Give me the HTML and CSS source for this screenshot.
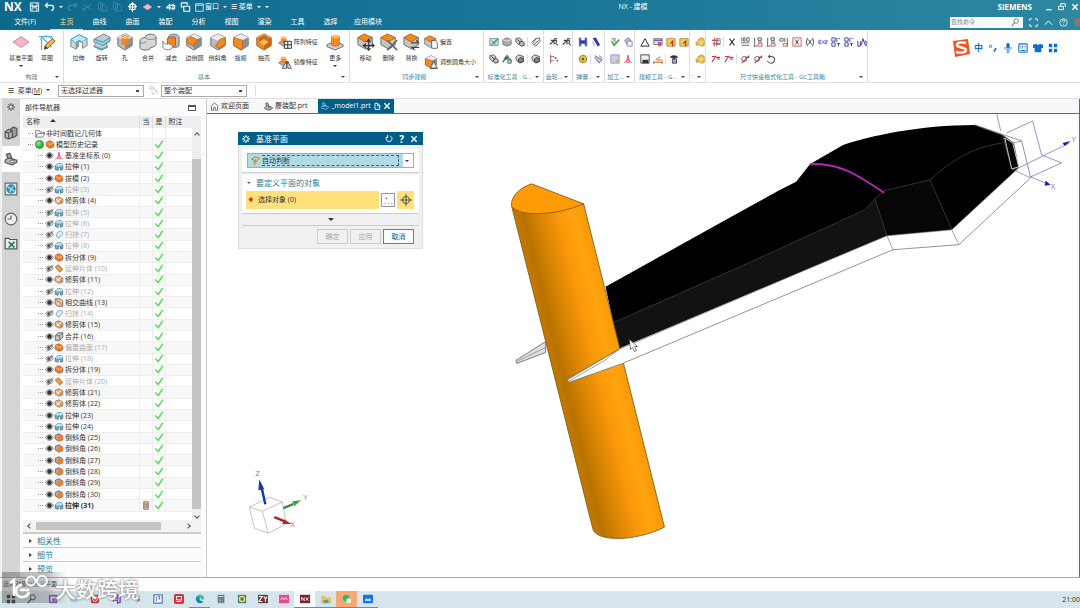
FILE: index.html
```html
<!DOCTYPE html>
<html lang="zh-CN">
<head>
<meta charset="utf-8">
<title>NX - 建模</title>
<link rel="stylesheet" href="styles.css">
</head>
<body>
<svg class="defs" aria-hidden="true">
  <symbol id="cube" viewBox="0 0 20 20"><path d="M10 1l8 4v9l-8 5-8-5V5z" fill="#b9b9b9" stroke="#666"/><path d="M10 1l8 4-8 4-8-4z" fill="#eee"/><path d="M10 9l8-4v9l-8 5z" fill="#8d8d8d"/></symbol>
  <symbol id="ocube" viewBox="0 0 20 20"><path d="M10 1l8 4v9l-8 5-8-5V5z" fill="#f28a1e" stroke="#8a5a2a"/><path d="M10 1l8 4-8 4-8-4z" fill="#ffb052"/><path d="M10 9l8-4v9l-8 5z" fill="#c8660c"/></symbol>
  <symbol id="plane" viewBox="0 0 20 20"><path d="M1 10l9-6 9 6-9 6z" fill="#f6b3c8" stroke="#d8849f"/></symbol>
  <symbol id="sketch" viewBox="0 0 20 20"><path d="M4 19V7M1 4h15M3 8c1-5 11-8 15 2M5 5l10 11" fill="none" stroke="#54b3cf" stroke-width="1.3"/><path d="M7 18l1-4 8-8 3 3-8 8z" fill="#f6b443" stroke="#6d5539"/><path d="M7 18l1-4 3 3z" fill="#444"/></symbol>
  <symbol id="extrude" viewBox="0 0 20 20"><path d="M1 7l9-5 9 4v8l-5 3v-6l-4-2-3 2v7l-6-3z" fill="#cfd8dc" stroke="#6b7b82"/><path d="M1 7l9-5 9 4-5 4-4-2-4 3z" fill="#bdeaf6" stroke="#43a9c6"/><path d="M7 11v7l3-3V8z" fill="#8d979b"/></symbol>
  <symbol id="revolve" viewBox="0 0 20 20"><path d="M1 7L12 1l7 4v4l-4 2 1 5-7 3-8-4 2-3-2-2z" fill="#c6ccd0" stroke="#6b7378"/><path d="M2 7l9 3 8-5M3 10l8 4 7-5M2 15l8 3 6-3" fill="none" stroke="#39a9cc" stroke-width="1.4"/></symbol>
  <symbol id="hole" viewBox="0 0 20 20"><use href="#cube"/><path d="M6 5v7c1 2 7 2 8 0V5z" fill="#ef8524"/><ellipse cx="10" cy="5" rx="4" ry="2" fill="#ffc47a" stroke="#c77b2e" stroke-width=".7"/></symbol>
  <symbol id="unite" viewBox="0 0 20 20"><path d="M7 5c0-5 12-5 12 0v7c0 3-4 4-6 4 0 4-12 4-12 0V9c0-3 4-4 6-4z" fill="#d6d6d6" stroke="#606060"/><path d="M7 5c1 3 11 3 12 0M1 9c0 3 7 3 7 0" fill="none" stroke="#888"/></symbol>
  <symbol id="subtract" viewBox="0 0 20 20"><path d="M7 5c0-5 12-5 12 0v8c0 3-4 3-6 3z" fill="#bcbcbc" stroke="#666"/><path d="M6 6l6-2 3 1v9l-4 2-5-3z" fill="#ee8423" stroke="#a65c16"/><path d="M1 9c0 3 4 4 7 3l4 2c0 6-11 6-11 1z" fill="#fff" stroke="#777"/></symbol>
  <symbol id="blend" viewBox="0 0 20 20"><use href="#cube"/><path d="M2 9c0-3 2-4 5-5l8 4c-4 1-5 4-5 7l-8-4z" fill="#f28a1e" stroke="#a65c16" stroke-width=".6"/></symbol>
  <symbol id="chamfer" viewBox="0 0 20 20"><use href="#cube"/><path d="M12 7l6-2v7l-6 5-5-2z" fill="#f28a1e" stroke="#a65c16" stroke-width=".6"/></symbol>
  <symbol id="draft" viewBox="0 0 20 20"><use href="#cube"/><path d="M2 5l10 3-1 11-9-5z" fill="#f28a1e" stroke="#a65c16" stroke-width=".6"/></symbol>
  <symbol id="shell" viewBox="0 0 20 20"><use href="#ocube"/><path d="M10 2l7 4-2 4-5-3-5 3-2-4z" fill="#c96c17"/><path d="M5 10l5-3 5 3-5 4z" fill="#ffbd70"/></symbol>
  <symbol id="boss" viewBox="0 0 20 20"><path d="M1 13l9-4 9 4v2l-9 4-9-4z" fill="#ccc" stroke="#666"/><path d="M6 4v9c1 2 8 2 9 0V4z" fill="#f28a1e" stroke="#a65c16" stroke-width=".6"/><ellipse cx="10.500" cy="4" rx="4.500" ry="2" fill="#ffb766"/></symbol>
  <symbol id="pattern" viewBox="0 0 20 20"><path d="M1 11l7-3 7 3-7 5z" fill="#bbb" stroke="#555"/><path d="M4 4v7c1 1 7 1 8 0V4z" fill="#f28a1e"/><ellipse cx="8" cy="4" rx="4" ry="2" fill="#ffb766"/><path d="M9 9h10v10H9zM14 9v10M9 14h10" fill="#fff" stroke="#222" stroke-width="1.300"/></symbol>
  <symbol id="mirror" viewBox="0 0 20 20"><path d="M1 11l7-3 7 3-7 5z" fill="#bbb" stroke="#555"/><path d="M4 4v7c1 1 7 1 8 0V4z" fill="#f28a1e"/><ellipse cx="8" cy="4" rx="4" ry="2" fill="#ffb766"/><path d="M12 9v10H6zM14 9v10h5z" fill="#eee" stroke="#222"/></symbol>
  <symbol id="topcube" viewBox="0 0 20 20"><path d="M1 5v8l9 5 7-5V5z" fill="#c4c4c4" stroke="#666"/><path d="M1 5l7-4 9 4-8 5z" fill="#f28a1e" stroke="#aa621d"/></symbol>
  <symbol id="move" viewBox="0 0 20 20"><use href="#topcube"/><path d="M13 8v11M8 14h11M11 10l2-3 2 3M11 17l2 2 2-2M10 12l-3 2 3 2M17 12l2 2-2 2" fill="none" stroke="#333" stroke-width="1.300"/></symbol>
  <symbol id="delete" viewBox="0 0 20 20"><use href="#topcube"/><path d="M8 8l11 11M19 8L8 19" stroke="#666" stroke-width="1.800"/></symbol>
  <symbol id="replace" viewBox="0 0 20 20"><use href="#topcube"/><path d="M9 11h8l-2-3M18 16h-8l3 3" fill="none" stroke="#444" stroke-width="1.500"/></symbol>
  <symbol id="offset" viewBox="0 0 20 20"><use href="#topcube"/><path d="M11 8h5l3 3v8h-8z" fill="#fff" stroke="#333"/></symbol>
  <symbol id="resize" viewBox="0 0 20 20"><use href="#draft"/><path d="M9 19l5-10 5 10zM9 19h10" fill="#eee" stroke="#333"/></symbol>

  <symbol id="s-win" viewBox="0 0 12 12"><path d="M1 2h10v8H1zM3 8l6-5M2 10L9 5" fill="#d5eef0" stroke="#54808a"/><path d="M3 4l5 5M7 7l4-5" stroke="#287"/></symbol>
  <symbol id="s-cyl" viewBox="0 0 12 12"><path d="M1 3l5-2 5 2v6l-5 2-5-2z" fill="#aaa" stroke="#777"/><path d="M1 3l5 2 5-2" fill="none" stroke="#eee"/></symbol>
  <symbol id="s-cyls" viewBox="0 0 12 12"><path d="M1 2l4-1 3 2v4L4 9 1 6z" fill="#ccc" stroke="#555"/><path d="M6 6l3-1 2 2v3l-3 1-3-2z" fill="#bbb" stroke="#333"/><path d="M3 3l3 3" stroke="#333"/></symbol>
  <symbol id="s-tag" viewBox="0 0 12 12"><path d="M2 8l4-6 4-1 1 4-5 6z" fill="#eee" stroke="#555"/><path d="M1 6l5-4M4 9l5-5" fill="none" stroke="#555"/></symbol>
  <symbol id="s-people" viewBox="0 0 12 12"><path d="M1 10l5-8 5 7" fill="none" stroke="#3a9b45" stroke-width="2"/><circle cx="5" cy="5" r="2" fill="#3557bd"/><path d="M7 7h4v4H7z" fill="#ccc" stroke="#555"/></symbol>
  <symbol id="s-gear" viewBox="0 0 12 12"><path d="M1 4l3-3 6 2v6l-4 2-4-3z" fill="#ddd" stroke="#444"/><path d="M4 6l3-2 3 2v3l-3 1-3-1z" fill="#888" stroke="#333"/></symbol>
  <symbol id="s-drw" viewBox="0 0 12 12"><path d="M1 9l5-5v5M2 4h7M6 2h4M7 7l4 3M9 4v3" fill="none" stroke="#444" stroke-width="1.300"/></symbol>
  <symbol id="s-link" viewBox="0 0 12 12"><path d="M2 1v10" stroke="#444"/><path d="M2 3h4v2M2 8h4" fill="none" stroke="#c75d42"/><path d="M7 4h2v2H7zM9 7h2v2H9z" fill="#5269bd"/></symbol>
  <symbol id="s-h" viewBox="0 0 12 12"><path d="M1 1h3v10H1zM8 1h3v10H8z" fill="#5662b8"/><path d="M3 4h6v4H3z" fill="#2936aa"/></symbol>
  <symbol id="s-pen" viewBox="0 0 12 12"><path d="M3 1l6 10M5 1l5 9" stroke="#2d39b3" stroke-width="2"/><path d="M2 5l2 6" stroke="#9997c8"/></symbol>
  <symbol id="s-ring" viewBox="0 0 12 12"><circle cx="6" cy="6" r="4.500" fill="#f1ca3c" stroke="#836d21"/><path d="M4 6l2-2 2 2-2 2z" fill="#654"/></symbol>
  <symbol id="s-clip" viewBox="0 0 12 12"><path d="M1 2l9 5-4 4-5-7M6 2l4 3" fill="#c8c7d9" stroke="#65618f"/></symbol>
  <symbol id="s-ok" viewBox="0 0 12 12"><path d="M1 1h6v7z" fill="#b0aadc"/><path d="M2 5l3 5 6-7" fill="none" stroke="#43a63b" stroke-width="2"/></symbol>
  <symbol id="s-copy" viewBox="0 0 12 12"><path d="M2 4l5-3 3 5-5 3z" fill="#c9c2e6" stroke="#7a6ca8"/><path d="M5 5h6v6H5z" fill="#f5f5f5" stroke="#847aaa"/></symbol>
  <symbol id="s-pic" viewBox="0 0 12 12"><path d="M1 1h10v10H1z" fill="#cacce8" stroke="#9392b5"/><path d="M7 6h4v4H7z" fill="#e8b64e"/></symbol>
  <symbol id="s-axis" viewBox="0 0 12 12"><path d="M6 1v6L1 11M6 7l5 4M4 10l2-8 2 8z" fill="none" stroke="#d95a8e" stroke-width="1.200"/></symbol>
  <symbol id="s-tri" viewBox="0 0 12 12"><path d="M6 2l5 9H1z" fill="none" stroke="#333" stroke-width="1.200"/></symbol>
  <symbol id="s-table" viewBox="0 0 12 12"><path d="M1 2h10v7H1z" fill="#f1ddec" stroke="#83558d"/><path d="M1 4h10" stroke="#6670b0" stroke-width="2"/><path d="M6 6h4v5H6z" fill="#bc5b65"/></symbol>
  <symbol id="s-folder" viewBox="0 0 12 12"><path d="M1 2h10v9H1z" fill="#f1cf5c" stroke="#ae8c35"/><path d="M5 8l3-3v6" fill="none" stroke="#b32d31" stroke-width="1.400"/></symbol>
  <symbol id="s-save" viewBox="0 0 12 12"><path d="M1 1h10v10H1z" fill="#eee" stroke="#333"/><path d="M3 7h7v4H3z" fill="#333"/></symbol>
  <symbol id="s-dim" viewBox="0 0 12 12"><path d="M1 10h10M1 8v4M11 8v4M3 7l6-4" stroke="#b65334"/><path d="M4 6h7v3H4z" fill="#e3c16c"/></symbol>
  <symbol id="s-hat" viewBox="0 0 12 12"><path d="M1 4c2-4 9-3 10 0L6 6z" fill="#333"/><path d="M4 6h5v5H4z" fill="#8daed5" stroke="#334"/></symbol>
  <symbol id="s-gold" viewBox="0 0 12 12"><path d="M1 7l3-2V3l4-2 3 2v7l-3 1-3-2-3 1z" fill="#f0c24a" stroke="#b88b1e"/><path d="M4 5l3 2 4-2M7 7v3" fill="none" stroke="#fff0a8"/></symbol>
  <symbol id="s-rgrid" viewBox="0 0 12 12"><path d="M4 1v10M7 2v9M1 4h9M2 8h9" stroke="#bd5261" stroke-width="1.300"/><path d="M7 2h4v7H7z" fill="none" stroke="#777"/></symbol>
  <symbol id="s-x" viewBox="0 0 12 12"><path d="M3 2l6 8M9 2l-6 8" stroke="#333" stroke-width="1.300"/></symbol>
  <symbol id="s-x1" viewBox="0 0 12 12"><path d="M2 1v4M4 1h2v4H4zM8 1h3v4H8zM1 7h10M2 10h9" fill="none" stroke="#555"/></symbol>
  <symbol id="s-x2" viewBox="0 0 12 12"><path d="M2 1v10M1 11h4M6 1h4v3H6zM6 6h5" fill="none" stroke="#444"/><path d="M6 8h5v3H6z" fill="none" stroke="#c44652"/></symbol>
  <symbol id="s-x3" viewBox="0 0 12 12"><path d="M1 2h4v3H1zM7 1v5M10 1v10" fill="none" stroke="#555"/><path d="M5 8h5v3H5z" fill="none" stroke="#c44652"/></symbol>
  <symbol id="s-bx" viewBox="0 0 12 12"><path d="M1 1h10v10H1z" fill="#fff6f6" stroke="#bd5050"/><path d="M4 3l4 6M8 3L4 9" stroke="#333"/></symbol>
  <symbol id="s-px" viewBox="0 0 12 12"><path d="M3 1Q0 6 3 11M9 1q3 5 0 10M4 3l4 6M8 3L4 9" fill="none" stroke="#333"/></symbol>
  <symbol id="s-ex" viewBox="0 0 12 12"><path d="M4 4H1v4h3M1 6h3M5 4l3 4M8 4L5 8M9 4h2v2H9v2h2" fill="none" stroke="#5353bb"/></symbol>
  <symbol id="s-blue" viewBox="0 0 12 12"><path d="M1 1h4v4H1zM7 1v5M9 2h2M1 7h4v4H1zM7 8h4M9 7v4" fill="none" stroke="#4d4da9" stroke-width="1.200"/></symbol>
  <symbol id="s-blue2" viewBox="0 0 12 12"><path d="M1 5v6h3V5M5 10l2-8 3 8M9 5h2v6" fill="none" stroke="#4444a5" stroke-width="1.200"/></symbol>
  <symbol id="s-red" viewBox="0 0 12 12"><path d="M1 10l5-8M1 3h4M6 4h5M7 6h4" fill="none" stroke="#b93d48" stroke-width="1.300"/></symbol>
  <symbol id="s-redcut" viewBox="0 0 12 12"><circle cx="5" cy="6" r="3" fill="none" stroke="#555"/><path d="M2 11l9-9M6 4h5" stroke="#bb3944" stroke-width="1.300"/></symbol>
  <symbol id="s-undo" viewBox="0 0 12 12"><path d="M3 3h4c5 1 4 8-1 8-3 0-4-2-4-3M5 1L3 3l2 2" fill="none" stroke="#555" stroke-width="1.300"/></symbol>

  <symbol id="eye" viewBox="0 0 12 12"><path d="M1 6c2-5 8-5 10 0-2 5-8 5-10 0z" fill="#ddd" stroke="#666"/><circle cx="6" cy="6" r="3" fill="#333"/></symbol>
  <symbol id="noeye" viewBox="0 0 12 12"><path d="M1 6c2-4 8-4 10 0-2 4-8 4-10 0zM2 11l8-10M4 11L11 2" fill="#eee" stroke="#666"/><circle cx="5" cy="6" r="2" fill="#555"/></symbol>
  <symbol id="t-extrude" viewBox="0 0 12 12"><path d="M1 5l3-3h5l2 3v5l-3 1V7H5v4l-4-1z" fill="#62b5d1" stroke="#4a6874"/><path d="M1 5l3-3h5l2 3-3 1H4z" fill="#b4e5f2"/></symbol>
  <symbol id="t-trim" viewBox="0 0 12 12"><path d="M1 3l5-2 5 3v5l-5 2-5-3z" fill="#ddb48f" stroke="#855f49"/><path d="M3 8l6-5M2 4l6 5" stroke="#fff"/><path d="M7 6h4v3l-4 2z" fill="#e98732"/></symbol>
  <symbol id="t-split" viewBox="0 0 12 12"><path d="M1 3l5-2 5 3v5l-5 2-5-3z" fill="#ed812a" stroke="#a15725"/><path d="M1 3l5 3 5-2" fill="none" stroke="#ffc48b"/></symbol>
  <symbol id="t-sheet" viewBox="0 0 12 12"><path d="M1 4l4-3 6 6-4 4z" fill="#eb8b38" stroke="#aa6632"/><path d="M3 4l4 4" stroke="#ffd8ad"/></symbol>
  <symbol id="t-scale" viewBox="0 0 12 12"><path d="M3 9c-3-5 6-10 8-5 0 3-4 4-5 7z" fill="#d7eff6" stroke="#4c98ab"/></symbol>
  <symbol id="t-unite" viewBox="0 0 12 12"><path d="M1 5l4-4h6v6l-4 4H1z" fill="#c9c9c9" stroke="#444"/><path d="M1 5h6l4-4M7 5v6" fill="none" stroke="#555"/></symbol>
  <symbol id="t-curve" viewBox="0 0 12 12"><path d="M1 1h7l3 3v7H4L1 8z" fill="#e0c7b0" stroke="#71513e"/><path d="M3 2c0 5 6 1 6 7" fill="none" stroke="#b95229"/></symbol>
  <symbol id="t-chamfer" viewBox="0 0 12 12"><path d="M1 3l5-2 5 3v5l-5 2-5-3z" fill="#aaa" stroke="#744"/><path d="M5 3l6 1v5l-5 2-2-3z" fill="#ef8228"/></symbol>
  <symbol id="stack-mark" viewBox="0 0 12 12"><path d="M3 1h6v10H3zM3 4h6M3 8h6" fill="#f2d2b4" stroke="#555"/><path d="M5 5h3v2H5z" fill="#e17424"/></symbol>
  <symbol id="folder" viewBox="0 0 14 12"><path d="M1 11V2h5l1 2h6v2M1 11l3-5h10l-3 5z" fill="#fff" stroke="#555"/></symbol>
  <symbol id="check" viewBox="0 0 12 12"><path d="M1 6l4 4 6-9" fill="none" stroke="#5edb62" stroke-width="2"/></symbol>
  <symbol id="clamp" viewBox="0 0 12 12"><path d="M2 2l3-1 2 5-3 1z" fill="#aaa" stroke="#555"/><path d="M1 7l3-2 7 2v2l-4 2-6-2z" fill="#bbb" stroke="#555"/><ellipse cx="7" cy="8" rx="2" ry="1" fill="#eee" stroke="#555" stroke-width=".7"/></symbol>
  <symbol id="home" viewBox="0 0 12 12"><path d="M1 6l5-5 5 5M2 6v5h3V7h2v4h3V6" fill="none" stroke="#555"/></symbol>
  <symbol id="cog" viewBox="0 0 12 12"><circle cx="6" cy="6" r="3.300" fill="none" stroke="currentColor" stroke-width="1.600"/><path d="M6 0v2M6 10v2M0 6h2M10 6h2M2 2l1 1M9 9l1 1M10 2L9 3M3 9l-1 1" stroke="currentColor" stroke-width="1.500"/></symbol>
  <symbol id="reset" viewBox="0 0 12 12"><path d="M4 2C1 3 1 10 6 10s6-7 2-8M4 0v4H1" fill="none" stroke="currentColor" stroke-width="1.500"/></symbol>
  <symbol id="cross" viewBox="0 0 12 12"><path d="M2 2l8 8M10 2l-8 8" stroke="currentColor" stroke-width="2"/></symbol>
  <symbol id="search" viewBox="0 0 12 12"><circle cx="7" cy="4" r="3" fill="none" stroke="currentColor" stroke-width="1.200"/><path d="M5 6l-4 5" stroke="currentColor" stroke-width="1.500"/></symbol>

  <symbol id="q-save" viewBox="0 0 12 12"><path d="M1 1h10v10H1zM3 1v4h6V1M3 11V7h6v4M1 5h10" fill="none" stroke="currentColor"/></symbol>
  <symbol id="q-undo" viewBox="0 0 12 12"><path d="M1 4h7c4 0 4 6 0 6M4 1L1 4l3 3" fill="none" stroke="currentColor" stroke-width="1.400"/></symbol>
  <symbol id="q-redo" viewBox="0 0 12 12"><path d="M11 4H4c-4 0-4 6 0 6M8 1l3 3-3 3" fill="none" stroke="currentColor" stroke-width="1.400"/></symbol>
  <symbol id="q-cut" viewBox="0 0 12 12"><path d="M1 3l10 6M11 3L1 9" stroke="currentColor"/><circle cx="2" cy="9" r="1.500" fill="none" stroke="currentColor"/></symbol>
  <symbol id="q-page" viewBox="0 0 12 12"><path d="M1 1h5v8H1zM4 3h5l2 2v6H4z" fill="none" stroke="currentColor"/></symbol>
  <symbol id="q-cam" viewBox="0 0 12 12"><path d="M6 0v12M1 6h10M3 3h6v6H3zM1 6l2-2M11 6L9 4M6 1L4 3M6 1l2 2" fill="none" stroke="currentColor" stroke-width="1.300"/></symbol>
  <symbol id="q-arr" viewBox="0 0 12 12"><path d="M1 7l4-4v7M1 7h6M6 4h5v4H7M9 2v8" fill="none" stroke="currentColor" stroke-width="1.300"/></symbol>
  <symbol id="q-dup" viewBox="0 0 12 12"><path d="M1 1h7v3M1 1v5h3M4 5h7v6H4z" fill="none" stroke="currentColor" stroke-width="1.300"/></symbol>
  <symbol id="q-win" viewBox="0 0 12 12"><path d="M1 1h10v10H1zM1 3h10" fill="none" stroke="currentColor"/></symbol>
</svg>

<header class="top">
  <div class="titlebar">
    <b class="logo">NX</b>
    <div class="quick">
      <button aria-label="保存"><svg><use href="#q-save"/></svg></button>
      <button aria-label="撤销"><svg><use href="#q-undo"/></svg></button><i class="caret"></i>
      <button class="dim" aria-label="重做"><svg><use href="#q-redo"/></svg></button>
      <button class="dim" aria-label="剪切"><svg><use href="#q-cut"/></svg></button>
      <button class="dim" aria-label="复制"><svg><use href="#q-page"/></svg></button>
      <button class="dim" aria-label="粘贴"><svg><use href="#q-page"/></svg></button>
      <button aria-label="捕捉"><svg><use href="#q-cam"/></svg></button>
      <button aria-label="平面"><svg><use href="#plane"/></svg></button><i class="caret"></i>
      <button aria-label="重复"><svg><use href="#q-arr"/></svg></button>
      <button aria-label="切换"><svg><use href="#q-dup"/></svg></button>
      <button class="wide"><svg><use href="#q-win"/></svg>窗口</button><i class="caret"></i>
      <button class="wide">☰ 菜单</button><i class="caret"></i><i class="caret"></i>
    </div>
    <h1>NX - 建模</h1>
    <div class="brand">
      <b>SIEMENS</b>
      <button aria-label="最小化"><svg viewBox="0 0 12 12"><path d="M2 10h8" stroke="currentColor" stroke-width="2"/></svg></button>
      <button aria-label="还原"><svg viewBox="0 0 12 12"><path d="M4 1h7v5M4 1v3M1 5h7v5H1z" fill="none" stroke="currentColor" stroke-width="1.500"/></svg></button>
      <button aria-label="关闭"><svg><use href="#cross"/></svg></button>
    </div>
  </div>
  <div class="menubar">
    <nav>
      <a href="#" class="file">文件(F)</a><a href="#" class="on">主页</a><a href="#">曲线</a><a href="#">曲面</a><a href="#">装配</a><a href="#">分析</a><a href="#">视图</a><a href="#">渲染</a><a href="#">工具</a><a href="#">选择</a><a href="#" class="long">应用模块</a>
    </nav>
    <div class="find">
      <label class="findbox"><input type="text" placeholder="查找命令" aria-label="查找命令"><svg><use href="#search"/></svg></label>
      <button aria-label="全屏"><svg viewBox="0 0 12 12"><path d="M1 4V1h3M8 1h3v3M11 8v3H8M4 11H1V8" fill="none" stroke="currentColor" stroke-width="1.200"/></svg></button>
      <button aria-label="收起"><svg viewBox="0 0 12 12"><path d="M1 9l5-5 5 5" fill="none" stroke="currentColor" stroke-width="1.300"/></svg></button>
      <button aria-label="帮助"><svg viewBox="0 0 12 12"><circle cx="6" cy="6" r="5" fill="none" stroke="currentColor"/><path d="M4 5c0-3 4-3 4-1 0 1-2 1-2 3M6 8v1" fill="none" stroke="currentColor"/></svg></button>
      <span class="dot"></span>
    </div>
  </div>
</header>

<section class="ribbon" aria-label="功能区">
  <div class="group g-build">
    <div class="tools">
      <button class="big"><svg><use href="#plane"/></svg>基准平面<i class="caret"></i></button>
      <button class="big"><svg><use href="#sketch"/></svg>草图</button>
    </div>
    <footer>构建<i class="caret"></i></footer>
  </div>
  <div class="group g-base">
    <div class="tools">
      <button class="big"><svg><use href="#extrude"/></svg>拉伸</button>
      <button class="big"><svg><use href="#revolve"/></svg>旋转</button>
      <button class="big"><svg><use href="#hole"/></svg>孔</button>
      <button class="big"><svg><use href="#unite"/></svg>合并</button>
      <button class="big"><svg><use href="#subtract"/></svg>减去</button>
      <button class="big"><svg><use href="#blend"/></svg>边倒圆</button>
      <button class="big"><svg><use href="#chamfer"/></svg>倒斜角</button>
      <button class="big"><svg><use href="#draft"/></svg>拔模</button>
      <button class="big"><svg><use href="#shell"/></svg>抽壳</button>
      <div class="stack">
        <button><svg><use href="#pattern"/></svg>阵列特征</button>
        <button><svg><use href="#mirror"/></svg>镜像特征</button>
      </div>
      <button class="big"><svg><use href="#boss"/></svg>更多<i class="caret"></i></button>
    </div>
    <footer>基本<i class="caret"></i></footer>
  </div>
  <div class="group g-sync">
    <div class="tools">
      <button class="big"><svg><use href="#move"/></svg>移动</button>
      <button class="big"><svg><use href="#delete"/></svg>删除</button>
      <button class="big"><svg><use href="#replace"/></svg>替换</button>
      <div class="stack">
        <button><svg><use href="#offset"/></svg>偏置</button>
        <button><svg><use href="#resize"/></svg>调整圆角大小</button>
      </div>
    </div>
    <footer>同步建模<i class="caret"></i></footer>
  </div>
  <div class="group g-std">
    <div class="small" data-rows="win cyl cyls | tag / cyls people gear | gear"></div>
    <footer>标准化工具 - G...<i class="caret"></i></footer>
  </div>
  <div class="group g-gear">
    <div class="small" data-rows="drw drw / link"></div>
    <footer>齿轮...<i class="caret"></i></footer>
  </div>
  <div class="group g-spring">
    <div class="small" data-rows="h pen / ring | clip"></div>
    <footer>弹簧...<i class="caret"></i></footer>
  </div>
  <div class="group g-mach">
    <div class="small" data-rows="ok copy / pic axis"></div>
    <footer>加工...<i class="caret"></i></footer>
  </div>
  <div class="group g-model">
    <div class="small" data-rows="tri table folder folder / save dim | hat"></div>
    <footer>建模工具 - G...<i class="caret"></i></footer>
  </div>
  <div class="group g-tiny">
    <div class="small" data-rows="gold / gold"></div>
    <footer>'.<i class="caret"></i></footer>
  </div>
  <div class="group g-dim">
    <div class="small" data-rows="rgrid | x x1 x2 x2 x3 bx px ex blue blue blue2 / red red | redcut redcut undo"></div>
    <footer>尺寸快速格式化工具 - GC工具箱<i class="caret"></i></footer>
  </div>
</section>

<div class="selbar">
  <button>☰&nbsp; 菜单(<u>M</u>)<i class="caret"></i></button>
  <select aria-label="选择过滤器"><option>无选择过滤器</option></select>
  <svg viewBox="0 0 12 12"><path d="M1 1h5v3H1zM6 4l4 3M8 7h3v4M4 6v4h4" fill="none" stroke="#bbb"/></svg>
  <select aria-label="选择范围"><option>整个装配</option></select>
  <span class="rule"></span>
</div>

<main class="work">
  <nav class="rail" aria-label="资源条">
    <button aria-label="设置"><svg><use href="#cog"/></svg></button>
    <button aria-label="装配导航器"><svg viewBox="0 0 12 12"><path d="M5 3l3-2 3 1v6L8 10z" fill="#999" stroke="#555"/><path d="M1 5l3-2 3 1v6l-3 1-3-1z" fill="#bbb" stroke="#555"/><path d="M1 5l3 1 3-2M4 6v5" fill="none" stroke="#555"/></svg></button>
    <button class="on" aria-label="部件导航器"><svg><use href="#clamp"/></svg></button>
    <button aria-label="浏览器"><svg viewBox="0 0 12 12"><path d="M1 1h10v10H1z" fill="#e5eff1" stroke="#667"/><circle cx="6" cy="6" r="4" fill="#2b93b5"/><path d="M3 4l3 2 2-2M5 9l1-3 3 2" fill="none" stroke="#b9e3ea"/></svg></button>
    <button aria-label="历史记录"><svg viewBox="0 0 12 12"><circle cx="6" cy="6" r="5" fill="#eee" stroke="#666"/><path d="M6 3v3H3" fill="none" stroke="#666"/></svg></button>
    <button aria-label="角色"><svg viewBox="0 0 12 12"><path d="M1 2h3l1 1h6v8H1z" fill="#e6efeb" stroke="#555"/><path d="M4 5l5 5M9 5l-5 5" stroke="#3b796d" stroke-width="1.500"/></svg></button>
  </nav>

  <aside class="panel">
    <h2>部件导航器<button aria-label="最大化"></button></h2>
    <div class="treebox">
      <div class="treewrap">
        <table class="tree">
          <thead><tr><th>名称<i class="caret up"></i></th><th>当</th><th>是</th><th>附注</th></tr></thead>
          <tbody id="tree"></tbody>
        </table>
      </div>
      <div class="vbar"><i class="chev up"></i><span></span><i class="chev down"></i></div>
    </div>
    <div class="hbar"><i class="chev left"></i><span></span><i class="chev right"></i></div>
    <button class="fold"><i class="tri"></i>相关性</button>
    <button class="fold"><i class="tri"></i>细节</button>
    <button class="fold"><i class="tri"></i>预览</button>
  </aside>

  <section class="view">
    <nav class="tabs">
      <a href="#"><svg><use href="#home"/></svg>欢迎页面</a>
      <a href="#"><svg><use href="#clamp"/></svg>履装配.prt</a>
      <a href="#" class="on"><svg viewBox="0 0 12 12"><path d="M2 2l3-1 2 5-3 1zM1 7l3-2 7 2v2l-4 2-6-2z" fill="none" stroke="#9cc3d3" stroke-width="1.200"/></svg><span>_model1.prt</span><svg viewBox="0 0 12 12"><path d="M3 2h4l3 3v6H3zM7 2v4h4" fill="none" stroke="#fff" stroke-width="1.300"/></svg><svg><use href="#cross"/></svg></a>
    </nav>
    <div class="canvas">
      <svg class="scene" viewBox="206 114 873 464" preserveAspectRatio="xMidYMid meet" role="img" aria-label="三维模型">
        <defs>
          <linearGradient id="skin" gradientUnits="userSpaceOnUse" x1="551" y1="365" x2="619" y2="348">
            <stop offset="0" stop-color="#c47900"/><stop offset=".12" stop-color="#b87200"/><stop offset=".35" stop-color="#da8504"/><stop offset=".6" stop-color="#f99708"/><stop offset=".82" stop-color="#ffa40f"/><stop offset="1" stop-color="#f79a08"/>
          </linearGradient>
        </defs>
        <path d="M515 361l30-19v11l-29 11z" fill="#ddd" stroke="#666" stroke-width=".8"/><path d="M516 362l29-14" stroke="#777" stroke-width=".6"/>
        <path d="M605 287L740 212 780 190 796 182 810 164 843 145C870 136 920 125 975 125L1003 135 1015 143 1019 168 952 230 887 236 806 270 618 349z"/>
        <path d="M613 323L740 267 865 210 875 199 887 236 806 270 618 349z" fill="#121212"/>
        <path d="M875 199l9-8 46-11 23 50-66 6z" fill="#060606"/>
        <path d="M613 323L740 267 865 210 875 199 884 191 930 180C955 158 975 147 1003 143M875 199l12 37M930 180l22 50" fill="none" stroke="#3d3d3d" stroke-width=".8"/>
        <path d="M511 207L592 529C594 543 635 543 664 528L583 204z" fill="url(#skin)" stroke="#78521b" stroke-width=".8"/>
        <path d="M531 184L583 204C558 215 520 218 511 207 509 198 518 188 531 184z" fill="#ff9b06" stroke="#7a5620" stroke-width=".8"/>
        <path d="M567 380L618 350 806 270 887 236 952 230 1019 168 1014 143 1003 135 975 125 1022 141 1031 178 959 245 893 250 622 364 568 383z" fill="#fff" stroke="#666" stroke-width=".7"/>
        <path d="M567 380l37-22 14-8-14 11-36 21M887 236l6 14M952 230l7 15M1003 135l9 34 7-1M1014 143l8-2M1012 169l19 9" fill="none" stroke="#777" stroke-width=".7"/>
        <path d="M1005 138l8 5 6 24-7 2z" fill="#080808" stroke="#eee" stroke-width=".8"/>
        <path d="M810 164C838 163 855 173 884 193" fill="none" stroke="#c724c9" stroke-width="1.800"/>
        <path d="M997 114l4 17M1007 133l26-12 9 34 20 8-31 14M1019 168l51-25M1031 177l19 8" fill="none" stroke="#7777d6" stroke-width=".8"/>
        <path d="M1063 143l8-2-6 5zM1046 181l5 4-6 1z" fill="#1b1bb5"/>
        <text x="1072" y="142" class="axis blue">Y</text><text x="1051" y="189" class="axis blue">X</text>
        <path d="M629 340l1 10 2-2 2 4 2-1-2-4h3z" fill="#fff" stroke="#555" stroke-width=".8"/>
        <path d="M248 508l20-10 13 5-20 9zM248 508l5 21 14 5-6-22M281 503l4 22-18 9" fill="none" stroke="#aaa" stroke-width=".7"/>
        <path d="M264 505l-4-18" stroke="#1233a7" stroke-width="2.400"/><path d="M258 480l5 10-6 1z" fill="#173ab3"/>
        <path d="M282 509l10-4" stroke="#3b8d3b" stroke-width="2.400"/><path d="M300 501l-7 6-2-5z" fill="#459d45"/>
        <path d="M273 518l10 4" stroke="#ac2222" stroke-width="2.400"/><path d="M290 525l-9 0 2-5z" fill="#b62828"/>
        <text x="254" y="477" class="axis zc">Z</text><text x="302" y="501" class="axis yc">Y</text><text x="289" y="528" class="axis xc">X</text>
      </svg>

      <section class="dialog" role="dialog" aria-label="基准平面">
        <header><svg><use href="#cog"/></svg><h3>基准平面</h3><button aria-label="重置"><svg><use href="#reset"/></svg></button><button aria-label="帮助" class="q">?</button><button aria-label="关闭"><svg><use href="#cross"/></svg></button></header>
        <div class="card">
          <div class="combo">
            <svg viewBox="0 0 12 12"><path d="M1 4l5-3 5 2-4 4z" fill="#f6e58a" stroke="#765"/><path d="M7 3L4 8h3l-3 4" fill="none" stroke="#c4902d" stroke-width="1.500"/></svg>
            <select aria-label="类型"><option>自动判断</option></select>
            <i class="caret"></i>
          </div>
        </div>
        <div class="card">
          <h4><i class="caret"></i>要定义平面的对象</h4>
          <div class="pick"><button class="target"><b>✷</b>选择对象 (0)</button><button class="dots" aria-label="点对话框"><svg viewBox="0 0 12 12"><circle cx="4" cy="4" r="1" fill="#c33"/><path d="M2 10h1M6 10h1M10 10h1" stroke="#555"/></svg></button><button class="aim" aria-label="选择对象"><svg viewBox="0 0 12 12"><circle cx="6" cy="6" r="3.500" fill="none" stroke="#555"/><path d="M6 0v12M0 6h12" stroke="#555"/></svg></button></div>
        </div>
        <i class="caret more"></i>
        <footer><button disabled>确定</button><button disabled>应用</button><button class="cancel">取消</button></footer>
      </section>
    </div>
  </section>
</main>

<div class="status">选择对象以定义平面</div>

<footer class="taskbar">
  <button aria-label="开始"><svg viewBox="0 0 12 12"><path d="M1 1h4v4H1zM7 1h4v4H7zM1 7h4v4H1zM7 7h4v4H7z" fill="#111"/></svg></button>
  <button aria-label="搜索"><svg><use href="#search"/></svg></button>
  <button aria-label="画图"><svg viewBox="0 0 12 12"><path d="M1 1h10v10H1z" fill="#6755aa"/><path d="M3 3h6v6H3z" fill="#eef"/><path d="M5 5h4v4H5z" fill="#a64db0"/></svg></button>
  <button aria-label="云盘"><svg viewBox="0 0 12 12"><path d="M2 9c-3-4 2-5 4-6 3 0 3 3 5 3 1 3-2 4-3 4z" fill="#9ac9e8"/></svg></button>
  <button aria-label="音乐"><svg viewBox="0 0 12 12"><rect x="1" y="1" width="10" height="10" rx="3" fill="#c62837"/><circle cx="6" cy="6" r="3" fill="none" stroke="#fff"/></svg></button>
  <button aria-label="开发工具"><svg viewBox="0 0 12 12"><path d="M2 3l6 6V3L2 9M8 1l3 1v8l-3 1z" fill="none" stroke="#8052ae" stroke-width="1.800"/></svg></button>
  <button aria-label="截图"><svg viewBox="0 0 12 12"><path d="M1 3l9-1-4 9-1-5z" fill="#86b9df"/><circle cx="8" cy="7" r="2" fill="#e27154"/></svg></button>
  <button aria-label="文档"><svg viewBox="0 0 12 12"><path d="M1 1h10v10H1z" fill="#fff" stroke="#557ac0" stroke-width="1.500"/><path d="M4 3v6M6 3h2v3H6" fill="none" stroke="#3559a8"/></svg></button>
  <button aria-label="阅读"><svg viewBox="0 0 12 12"><rect width="12" height="12" rx="2" fill="#dc2f3e"/><path d="M3 3h6v4H3zM3 9h5l1-2" fill="none" stroke="#fff" stroke-width="1.200"/></svg></button>
  <button aria-label="浏览器" class="run"><svg viewBox="0 0 12 12"><circle cx="6" cy="6" r="5" fill="#1585cc"/><path d="M2 3c4-4 9-1 9 3-2 2-5 1-5-1 0-2-3-2-5 0z" fill="#45c580"/><path d="M6 5c0 3 3 3 5 2" stroke="#fff" fill="none" stroke-width="1.500"/></svg></button>
  <button aria-label="计算器"><svg viewBox="0 0 12 12"><path d="M2 1h8v10H2z" fill="#607985"/><path d="M3 3h6" stroke="#dce8ed"/><path d="M3 6h6M3 8h6M3 10h6" stroke="#b9cad1" stroke-dasharray="1 1"/></svg></button>
  <button aria-label="相机"><svg viewBox="0 0 12 12"><path d="M1 1h10v10H1z" fill="#3b848d"/><circle cx="6" cy="6" r="4" fill="#f1d355"/><circle cx="6" cy="6" r="2" fill="#356fa8"/></svg></button>
  <button aria-label="制图"><svg viewBox="0 0 12 12"><path d="M0 1h12v10H0z" fill="#6b393f"/><path d="M1 3h4L1 9h4M7 3l2 3 2-3M9 6v3" fill="none" stroke="#fff" stroke-width="1.400"/></svg></button>
  <button aria-label="视频"><svg viewBox="0 0 12 12"><path d="M0 1h12v10H0z" fill="#e9488c"/><path d="M2 7l2-3 2 3 2-3 2 3" fill="none" stroke="#fff"/></svg></button>
  <button aria-label="NX" class="run lit"><svg viewBox="0 0 12 12"><path d="M0 1h12v10H0z" fill="#811f2a"/><path d="M2 8V4l3 4V4M7 4l3 4M10 4L7 8" fill="none" stroke="#fff"/></svg></button>
  <button aria-label="文件夹" class="run"><svg viewBox="0 0 12 12"><path d="M0 2h5l1 2h6v7H0z" fill="#f1c34d"/><path d="M3 7h6v4H3z" fill="#479bd0"/></svg></button>
  <button aria-label="微信" class="run alert"><svg viewBox="0 0 12 12"><circle cx="5" cy="5" r="4" fill="#31b856"/><circle cx="8" cy="8" r="3" fill="#e6f6e8"/></svg></button>
  <button aria-label="会议" class="run"><svg viewBox="0 0 12 12"><rect y="1" width="12" height="10" rx="1" fill="#1476e6"/><path d="M2 8l2-3 2 2 2-2 2 3z" fill="#fff"/></svg></button>
  <time>21:00</time>
</footer>

<div class="ime">
  <svg class="sogou" viewBox="0 0 20 20"><path d="M2 3l15-2 2 15-15 3z" fill="#f05423"/><path d="M15 5c-4-1-9-1-9 2s9 2 9 5-6 3-10 2" fill="none" stroke="#fff" stroke-width="2.400"/></svg>
  <span>中</span>
  <svg viewBox="0 0 12 12"><circle cx="3" cy="4" r="1.500" fill="none" stroke="#0f6fd0"/><path d="M9 6v2l-2 2" stroke="#0f6fd0" stroke-width="2" fill="none"/></svg>
  <svg viewBox="0 0 12 12"><rect x="4" y="0" width="4" height="7" rx="2" fill="#0f6fd0"/><path d="M2 5c0 5 8 5 8 0M6 9v3M4 12h4" fill="none" stroke="#0f6fd0"/></svg>
  <svg viewBox="0 0 12 12"><rect x="1" y="1" width="10" height="10" rx="1" fill="none" stroke="#0f6fd0" stroke-width="1.300"/><path d="M3 4h1M5 4h1M8 4h1M3 6h1M5 6h1M8 6h1M3 9h6" stroke="#0f6fd0" stroke-width="1.300"/></svg>
  <svg viewBox="0 0 12 12"><path d="M0 2l4-1c1 2 3 2 4 0l4 1v4h-2v5H2V6H0z" fill="#0f6fd0"/></svg>
  <svg viewBox="0 0 12 12"><path d="M1 1h4v4H1zM7 1h4v4H7zM1 7h4v4H1zM7 7h4v4H7z" fill="#0f6fd0"/></svg>
</div>

<div class="mark">
  <svg viewBox="0 0 50 30"><path d="M8 10l4-3v16M20 12c-8 0-8 12 0 12 4 0 6-2 7-5M18 17h9" fill="none" stroke="#fff" stroke-width="2.500"/><circle cx="29" cy="8" r="4.500" fill="none" stroke="#fff" stroke-width="1.800"/><circle cx="40" cy="8" r="5" fill="none" stroke="#fff" stroke-width="1.800"/></svg>
  <span>大数跨境</span>
</div>
<script src="script.js"></script>
</body>
</html>
```
FILE: styles.css
```css
* { box-sizing: border-box; }
html, body { height: 100%; }
body {
  margin: 0; display: flex; flex-direction: column; min-height: 100vh; overflow: hidden;
  background: #fff; color: #333;
  font: 7px/10px "Open Sans", "Noto Sans CJK SC", sans-serif;
}
button, input, select { font: inherit; color: inherit; border: 0; padding: 0; margin: 0; background: none; }
a { color: inherit; text-decoration: none; }
h1, h2, h3, h4 { margin: 0; font: inherit; }
svg { display: block; flex: none; }
.defs { position: absolute; width: 0; height: 0; }
.caret { display: inline-block; border: 2px solid transparent; border-top-color: currentColor; border-bottom: 0; }
.caret.up { border-bottom: 3px solid currentColor; border-top: 0; border-left-width: 3px; border-right-width: 3px; }

.top { background: linear-gradient(90deg, #0d6a8c, #1a7698 50%, #2c87a1); color: #fff; flex: none; }
.titlebar { display: grid; grid-template-columns: 1fr auto 1fr; align-items: center; height: 14px; }
.logo { grid-area: 1 / 1; padding-left: 4px; font-size: 12px; line-height: 14px; }
.quick { grid-area: 1 / 1; display: flex; align-items: center; gap: 4px; padding-left: 29px; }
.quick svg { width: 11px; height: 10px; }
.quick .wide { display: flex; align-items: center; gap: 1px; white-space: nowrap; }
.quick .wide svg { width: 9px; height: 9px; }
.quick .dim { opacity: .2; }
.titlebar h1 { grid-column: 2; padding-left: 186px; line-height: 14px; }
.brand { display: flex; justify-content: flex-end; align-items: center; gap: 5px; padding-right: 1px; }
.brand b { font-size: 8px; padding-right: 8px; }
.brand svg { width: 8px; height: 8px; }
.menubar { display: flex; justify-content: space-between; height: 16px; }
.menubar nav { display: flex; }
.menubar a { width: 33px; text-align: center; line-height: 16px; }
.menubar .file { width: 50px; }
.menubar .long { width: 42px; }
.menubar .on { color: #f6df72; border-bottom: 1px solid #f6df72; }
.find { display: flex; align-items: center; gap: 6px; }
.findbox { display: flex; align-items: center; width: 73px; height: 11px; background: #f8f8f8; color: #777; }
.findbox input { width: 61px; padding-left: 1px; font-size: 6px; outline: 0; }
.findbox input::placeholder { color: #888; }
.find svg { width: 9px; height: 9px; }
.dot { width: 6px; height: 8px; border-radius: 4px 0 0 4px; background: #8b7372; }

.ribbon { display: flex; flex: none; height: 53px; border-bottom: 1px solid #e2e2e2; background: #fff; }
.group { display: flex; flex-direction: column; justify-content: space-between; border-right: 1px solid #ddd; }
.group footer { display: flex; align-items: center; justify-content: center; height: 10px; color: #3a8296; white-space: nowrap; font-size: 6px; padding-right: 4px; }
.group footer .caret { margin-left: auto; color: #444; }
.group footer::before { content: ""; margin-left: auto; }
.tools { display: flex; padding-top: 3px; }
.big { display: flex; flex-direction: column; align-items: center; width: 23px; font-size: 6px; line-height: 10px; white-space: nowrap; }
.big svg { width: 18px; height: 18px; margin-bottom: 2px; }
.big .caret { margin-top: 2px; }
.stack { display: flex; flex-direction: column; gap: 5px; padding-top: 1px; }
.stack button { display: flex; align-items: center; gap: 2px; height: 15px; font-size: 6px; white-space: nowrap; }
.stack svg { width: 14px; height: 14px; }
.g-build { width: 64px; padding-left: 8px; }
.g-build .big { width: 26px; }
.g-base { width: 286px; padding-left: 3px; }
.g-base .stack { width: 48px; padding-left: 2px; }
.g-base .tools { justify-content: space-between; padding-right: 2px; }
.g-sync { width: 134px; padding-left: 4px; }
.g-sync .stack { width: 56px; padding-left: 1px; }
.g-std { width: 60px; }
.g-gear { width: 29px; }
.g-spring { width: 32px; }
.g-mach { width: 30px; }
.g-model { width: 55px; }
.g-tiny { width: 16px; }
.g-dim { width: 162px; }
.small { padding: 7px 0 0 3px; display: grid; gap: 7px; }
.small div { display: flex; align-items: center; }
.small button { width: 13px; display: flex; justify-content: center; }
.small svg { width: 10px; height: 10px; }
.small i { width: 1px; height: 10px; margin: 0 1px; background: #ddd; }

.selbar { display: flex; align-items: center; flex: none; height: 16px; padding-left: 8px; border-bottom: 1px solid #e0e0e0; }
.selbar button { width: 50px; text-align: left; }
.selbar .caret { margin: 0 0 2px 4px; }
select { appearance: none; }
.selbar select { width: 86px; height: 12px; padding: 0 2px; border: 1px solid #aaa; font-size: 7px; background: #fff linear-gradient(#444, #444) no-repeat right 4px center / 3px 2px; }
.selbar svg { width: 9px; height: 9px; margin: 0 3px 0 5px; }
.rule { width: 1px; height: 11px; margin-left: 8px; background: #ddd; }

.work { display: flex; flex: 1; min-height: 0; border-bottom: 1px solid #aaa; }
.rail { display: flex; flex-direction: column; flex: none; width: 20px; border-left: 2px solid #f0f0f0; background: #d4d4d4; color: #555; }
.rail button { height: 26px; margin-bottom: 4px; display: grid; place-items: center; }
.rail svg { width: 14px; height: 14px; }
.rail button:first-child { height: 16px; }
.rail button:first-child svg { width: 8px; height: 8px; }
.rail button:nth-child(2) { margin-bottom: 0; height: 27px; }
.rail button:nth-child(5) { margin-bottom: 0; }
.rail button:last-child { height: 22px; }
.rail .on { background: #fff; }
.panel { display: flex; flex-direction: column; flex: none; width: 187px; padding: 0 5px 1px 3px; border-right: 1px solid #ccc; background: #fcfcfc; }
.panel h2 { display: flex; align-items: center; justify-content: space-between; height: 17px; padding: 0 5px 0 2px; }
.panel h2 button { width: 8px; height: 6px; border: 1px solid #555; border-top-width: 2px; }
.treebox { display: flex; flex: 1; min-height: 0; }
.treewrap { flex: 1; height: 100%; padding-bottom: 8px; background: #fff; }
.tree { width: 100%; height: 100%; border-collapse: collapse; table-layout: fixed; background: #fff; }
.tree th { height: 12px; padding: 0 3px; text-align: left; font-weight: 400; background: #efefef; border-right: 1px solid #ddd; white-space: nowrap; }
.tree th:nth-child(2), .tree th:nth-child(3) { width: 13px; }
.tree th:nth-child(4) { width: 27px; border-right: 0; }
.tree .caret.up { margin: 0 0 2px 10px; }
.tree td { padding: 0; line-height: 9px; border-right: 1px solid #eee; border-bottom: 1px solid #eee; }
.tree tr:nth-child(even) td { background: #f8f8f8; }
.tree td svg { width: 10px; height: 9px; margin: auto; }
.tree td:nth-child(4) { border-right: 0; }
.node { display: flex; align-items: center; height: 9px; padding-left: 22px; white-space: nowrap; }
.node::before { content: ""; width: 5px; margin-left: -7px; margin-right: 2px; border-top: 1px dotted #999; }
.tree .node svg { margin: 0 1px 0 0; }
.tree .node svg.eye { width: 9px; margin: 0; }
.node.root { padding-left: 12px; }
.node.off { color: #aaa; }
.node.now { font-weight: 700; }
.ball { width: 9px; height: 9px; margin-right: 1px; border-radius: 50%; background: radial-gradient(circle at 35% 30%, #9df090, #27b33b 60%); border: 1px solid #389244; }
.vbar { display: flex; flex-direction: column; align-items: center; width: 9px; padding: 17px 0 2px; background: #eee; }
.vbar span { flex: 1; width: 100%; margin: 22px 0 5px; background: #c4c4c4; }
.hbar { display: flex; align-items: center; height: 14px; padding: 2px 11px 2px 5px; border-bottom: 2px solid #ccc; background: #f3f3f3; }
.hbar span { width: 125px; height: 8px; margin-left: 4px; background: #c4c4c4; }
.hbar .right { margin-left: auto; }
.chev { width: 4px; height: 4px; border: solid #555; border-width: 1px 1px 0 0; flex: none; }
.chev.up { transform: rotate(-45deg); }
.chev.down { transform: rotate(135deg); }
.chev.left { transform: rotate(-135deg); }
.chev.right { transform: rotate(45deg); }
.fold { display: flex; align-items: center; gap: 5px; height: 14px; flex: none; padding-left: 6px; border-bottom: 1px solid #ccc; color: #287d96; font-size: 8px; }
.fold:last-child { border-bottom: 0; }
.tri { border: 2px solid transparent; border-left: 3px solid #246; border-right: 0; }

.view { display: flex; flex-direction: column; flex: 1; min-width: 0; border-right: 1px solid #667; }
.tabs { display: flex; height: 15px; flex: none; background: #f8f8f8; border-bottom: 1px solid #34799a; }
.tabs a { display: flex; align-items: center; gap: 2px; padding: 0 11px 0 3px; white-space: nowrap; }
.tabs a + a { padding-left: 4px; }
.tabs svg { width: 9px; height: 9px; }
.tabs a.on { padding: 0 3px; color: #fff; background: #005f87; }
.tabs .on svg { width: 8px; height: 8px; }
.canvas { position: relative; flex: 1; min-height: 0; }
.scene { width: 100%; height: 100%; }
.axis { font-size: 8px; }
.blue { fill: #7070c8; } .zc { fill: #6b7fc0; } .yc { fill: #888; } .xc { fill: #d06060; }

.dialog { position: absolute; left: 31px; top: 18px; width: 185px; padding-bottom: 4px; background: #f0f0f0; border: 1px solid #ddd; }
.dialog header { display: flex; align-items: center; gap: 6px; height: 13px; padding: 0 5px 0 4px; margin: -1px -1px 4px; background: #005f87; color: #fff; }
.dialog header svg { width: 8px; height: 8px; }
.dialog h3 { flex: 1; font-size: 8px; }
.dialog .q { font-size: 10px; font-weight: 700; }
.card { margin: 0 3px 2px; padding: 4px 5px; background: #fff; border-bottom: 1px solid #ccc; }
.card + .card { padding: 3px 5px 4px; }
.combo { display: flex; align-items: center; gap: 2px; height: 15px; padding: 0 4px 0 3px; border: 1px solid #aaa; background: linear-gradient(90deg, #b0dbe6 155px, #fff 155px); }
.combo svg { width: 9px; height: 9px; }
.combo select { flex: 1; height: 11px; margin-right: 4px; border: dashed #557; border-width: 1px 1px 1px 0; }
.card h4 { display: flex; align-items: center; gap: 5px; height: 9px; margin-bottom: 4px; color: #287d96; font-size: 8px; }
.pick { display: flex; align-items: center; gap: 2px; height: 18px; margin-left: -1px; }
.target { flex: 1; height: 18px; text-align: left; padding-left: 2px; background: #ffe07a; }
.target b { margin-right: 4px; color: #d22; }
.dots { width: 14px; height: 14px; border: 1px solid #999; background: #fff; display: grid; place-items: center; }
.dots svg { width: 10px; height: 10px; }
.aim { width: 17px; height: 18px; background: #ffe07a; display: grid; place-items: center; }
.aim svg { width: 12px; height: 12px; }
.more { display: block; width: 6px; margin: 4px auto; border-width: 3px 3px 0; }
.dialog footer { display: flex; justify-content: flex-end; gap: 2px; margin: 0 3px; padding: 3px 5px 0; border-top: 1px solid #ccc; }
.dialog footer button { width: 31px; height: 15px; border: 1px solid #ccc; color: #aaa; }
.dialog footer .cancel { border-color: #4f8c9e; color: #16627e; background: #f8fcfd; }

.status { flex: none; height: 13px; padding: 1px 3px; font-size: 6px; }
.taskbar { display: flex; align-items: stretch; flex: none; height: 17px; background: #d5e5eb; color: #333; }
.taskbar button { width: 21px; display: grid; place-items: center; border-bottom: 1px solid transparent; }
.taskbar button svg { width: 10px; height: 10px; }
.taskbar .run { border-bottom-color: #748896; }
.taskbar .lit { background: #f6fafb; }
.taskbar .alert { background: #f2a974; }
.taskbar time { margin-left: auto; line-height: 17px; }

.ime { position: absolute; top: 38px; right: 18px; display: flex; align-items: center; gap: 5px; height: 20px; color: #0f6fd0; }
.ime::before { content: ""; position: absolute; inset: 3px 0 1px 10px; border: 1px solid #bcd4ec; background: #fff; border-radius: 1px; z-index: -1; }
.ime svg { width: 10px; height: 10px; }
.ime svg:last-child { margin-right: 4px; }
.ime .sogou { width: 20px; height: 20px; margin-right: -2px; }
.ime span { font-size: 9px; font-weight: 700; }
.mark { position: absolute; left: 2px; bottom: 5px; display: flex; align-items: center; gap: 3px; height: 31px; color: #fff; background: linear-gradient(90deg, rgba(110,110,110,.55), rgba(110,110,110,.4) 45px, rgba(110,110,110,0) 65px); }
.mark svg { width: 50px; height: 30px; }
.mark span { font: 500 21px/30px "Noto Sans CJK SC", sans-serif; text-shadow: 0 0 2px #888, 0 0 3px #888; }
```
FILE: script.js
```js
const use = (id, cls) => `<svg class="${cls || ''}" aria-hidden="true"><use href="#${id}"/></svg>`;

// Small ribbon tools: rows split by "/", separators marked "|"
document.querySelectorAll('.small').forEach(box => {
  box.innerHTML = box.dataset.rows.split('/').map(row =>
    '<div>' + row.trim().split(' ').map(n =>
      n === '|' ? '<i></i>' : `<button aria-label="${n}">${use('s-' + n)}</button>`).join('') + '</div>').join('');
});

// Feature history: name, icon, visible
const features = [
  ['基准坐标系', 's-axis', 1], ['拉伸', 't-extrude', 1], ['拔模', 't-split', 1], ['拉伸', 't-extrude', 0],
  ['修剪体', 't-trim', 1], ['拉伸', 't-extrude', 0], ['拉伸', 't-extrude', 0], ['扫掠', 't-scale', 0],
  ['拉伸', 't-extrude', 0], ['拆分体', 't-split', 1], ['延伸片体', 't-sheet', 0], ['修剪体', 't-trim', 1],
  ['拉伸', 't-extrude', 0], ['相交曲线', 't-curve', 1], ['扫掠', 't-scale', 0], ['修剪体', 't-trim', 1],
  ['合并', 't-unite', 1], ['偏置曲面', 't-split', 0], ['拉伸', 't-extrude', 0], ['拆分体', 't-split', 1],
  ['延伸片体', 't-sheet', 0], ['修剪体', 't-trim', 1], ['修剪体', 't-trim', 1], ['拉伸', 't-extrude', 1],
  ['拉伸', 't-extrude', 1], ['倒斜角', 't-chamfer', 1], ['倒斜角', 't-chamfer', 1], ['倒斜角', 't-chamfer', 1],
  ['倒斜角', 't-chamfer', 1], ['倒斜角', 't-chamfer', 1], ['倒斜角', 't-chamfer', 1], ['拉伸', 't-extrude', 1]
];
const row = (cell, cur, ok) => `<tr><td>${cell}</td><td>${cur}</td><td>${ok}</td><td></td></tr>`;
const check = use('check');
document.getElementById('tree').innerHTML =
  row(`<div class="node root">${use('folder')}非时间戳记几何体</div>`, '', '') +
  row(`<div class="node root"><span class="ball"></span>${use('t-split')}模型历史记录</div>`, '', check) +
  features.map(([name, icon, on], i) => {
    const last = i === features.length - 1;
    return row(`<div class="node ${on ? '' : 'off'} ${last ? 'now' : ''}">${use(on ? 'eye' : 'noeye', 'eye')}${use(icon)}${name} (${i})</div>`,
      last ? use('stack-mark') : '', check);
  }).join('');
```
